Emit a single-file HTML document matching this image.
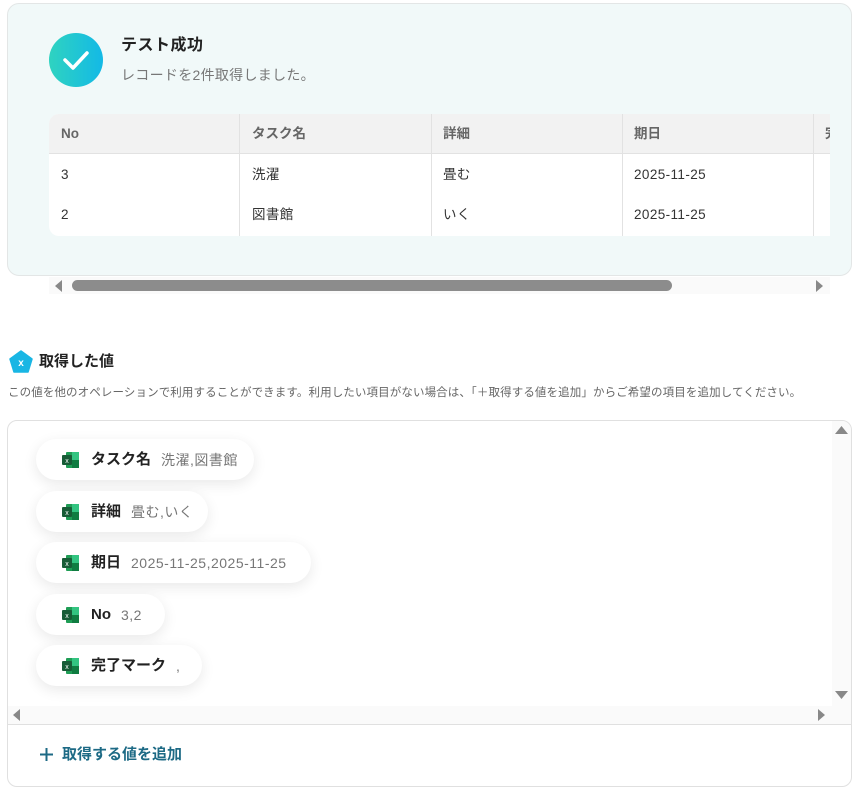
<!DOCTYPE html>
<html><head><meta charset="utf-8"><style>
*{margin:0;padding:0;box-sizing:border-box}
body{width:865px;height:792px;background:#fff;font-family:"Liberation Sans","Noto Sans CJK JP",sans-serif;position:relative;overflow:hidden;color:#333}
.abs{position:absolute}
.card{left:7px;top:3px;width:845px;height:273px;background:#f1f9f9;border:1px solid #e3e6e6;border-radius:12px}
.chk{left:49px;top:33px;width:54px;height:54px;border-radius:50%;background:linear-gradient(90deg,#2fd3c0,#13b9e6)}
.tbl{left:49px;top:114px;width:781px;height:122px;background:#fff;border-radius:10px 0 0 10px;overflow:hidden}
.hdr{left:0;top:0;width:781px;height:40px;background:#f2f2f2;border-bottom:1px solid #e2e2e2}
.vl{width:1px;background:#e2e2e2;top:0;height:122px}
.t{font-size:13.5px;white-space:nowrap;line-height:18px;height:18px;letter-spacing:.4px}
.h{color:#666;font-weight:bold;letter-spacing:0}
.pill{left:36px;height:41px;border-radius:21px;background:#fff;box-shadow:0 4px 14px rgba(0,0,0,.09);display:flex;align-items:center;padding-left:26px;white-space:nowrap;line-height:20px}
.pill b{font-size:15px;color:#222;margin-left:12px;font-weight:600}
.pill span{font-size:14px;color:#777;margin-left:10px;letter-spacing:.5px}
.xl{width:17px;height:16px;position:relative}
</style></head><body>
<div class="abs card"></div>
<div class="abs chk"><svg width="54" height="54"><path d="M16 27 L24 35 L38 20" stroke="#fff" stroke-width="3.5" fill="none" stroke-linecap="round" stroke-linejoin="round"/></svg></div>
<div class="abs" style="left:121px;top:36px;font-size:16px;line-height:20px;font-weight:bold;color:#222;letter-spacing:.5px">テスト成功</div>
<div class="abs" style="left:121px;top:65px;font-size:14px;line-height:20px;color:#777;letter-spacing:.3px">レコードを2件取得しました。</div>
<div class="abs tbl">
<div class="abs hdr"></div>
<div class="abs vl" style="left:190px"></div><div class="abs vl" style="left:382px"></div><div class="abs vl" style="left:573px"></div><div class="abs vl" style="left:764px"></div>
<div class="abs t h" style="left:12px;top:11px">No</div>
<div class="abs t h" style="left:203px;top:11px">タスク名</div>
<div class="abs t h" style="left:394px;top:11px">詳細</div>
<div class="abs t h" style="left:585px;top:11px">期日</div>
<div class="abs t h" style="left:776px;top:11px">完了</div>
<div class="abs t" style="left:12px;top:52px">3</div><div class="abs t" style="left:203px;top:52px">洗濯</div><div class="abs t" style="left:394px;top:52px">畳む</div><div class="abs t" style="left:585px;top:52px">2025-11-25</div>
<div class="abs t" style="left:12px;top:92px">2</div><div class="abs t" style="left:203px;top:92px">図書館</div><div class="abs t" style="left:394px;top:92px">いく</div><div class="abs t" style="left:585px;top:92px">2025-11-25</div>
</div>
<div class="abs" style="left:49px;top:277px;width:781px;height:17px;background:#fafafa"></div>
<div class="abs" style="left:72px;top:280px;width:600px;height:11px;border-radius:6px;background:#8c8c8c"></div>
<svg class="abs" style="left:54px;top:280px" width="10" height="12"><path d="M8 0 L1 6 L8 12Z" fill="#888"/></svg>
<svg class="abs" style="left:815px;top:280px" width="10" height="12"><path d="M1 0 L8 6 L1 12Z" fill="#888"/></svg>

<svg class="abs" style="left:9px;top:350px" width="24" height="23"><path d="M12 1 L23 9 L19 22 L5 22 L1 9Z" fill="#19b6e4" stroke="#19b6e4" stroke-width="1.5" stroke-linejoin="round"/><text x="12" y="16" font-size="10" font-weight="bold" fill="#fff" text-anchor="middle" font-family="Liberation Sans">x</text></svg>
<div class="abs" style="left:39px;top:352px;font-size:15px;line-height:20px;font-weight:bold;color:#222">取得した値</div>
<div class="abs" style="left:8px;top:385px;font-size:11.5px;line-height:16px;color:#666;white-space:nowrap;letter-spacing:.11px">この値を他のオペレーションで利用することができます。利用したい項目がない場合は、「＋取得する値を追加」からご希望の項目を追加してください。</div>

<div class="abs" style="left:7px;top:420px;width:845px;height:367px;border:1px solid #e0e0e0;border-radius:10px;overflow:hidden">
<div class="abs" style="left:824px;top:0;width:20px;height:285px;background:#fafafa"></div>
<div class="abs" style="left:0;top:285px;width:845px;height:19px;background:#fafafa"></div>
<div class="abs" style="left:0;top:303px;width:845px;height:1px;background:#e0e0e0"></div>
</div>
<svg class="abs" style="left:835px;top:425px" width="13" height="10"><path d="M0 9 L6.5 1 L13 9Z" fill="#888"/></svg>
<svg class="abs" style="left:835px;top:690px" width="13" height="10"><path d="M0 1 L6.5 9 L13 1Z" fill="#888"/></svg>
<svg class="abs" style="left:12px;top:709px" width="10" height="12"><path d="M8 0 L1 6 L8 12Z" fill="#888"/></svg>
<svg class="abs" style="left:817px;top:709px" width="10" height="12"><path d="M1 0 L8 6 L1 12Z" fill="#888"/></svg>

<div class="abs pill" style="top:439px;width:218px"><svg class="xl" viewBox="0 0 17 16"><rect x="4" y="0" width="13" height="16" rx="1" fill="#1f9d55"/><rect x="10" y="0" width="7" height="16" fill="#33c481"/><rect x="10" y="8" width="7" height="8" fill="#107c41"/><rect x="0" y="3" width="10" height="10" rx="1" fill="#185c37"/><text x="5" y="11" font-size="7" fill="#fff" text-anchor="middle" font-family="Liberation Sans">x</text></svg><b>タスク名</b><span>洗濯,図書館</span></div>
<div class="abs pill" style="top:491px;width:172px"><svg class="xl" viewBox="0 0 17 16"><rect x="4" y="0" width="13" height="16" rx="1" fill="#1f9d55"/><rect x="10" y="0" width="7" height="16" fill="#33c481"/><rect x="10" y="8" width="7" height="8" fill="#107c41"/><rect x="0" y="3" width="10" height="10" rx="1" fill="#185c37"/><text x="5" y="11" font-size="7" fill="#fff" text-anchor="middle" font-family="Liberation Sans">x</text></svg><b>詳細</b><span>畳む,いく</span></div>
<div class="abs pill" style="top:542px;width:275px"><svg class="xl" viewBox="0 0 17 16"><rect x="4" y="0" width="13" height="16" rx="1" fill="#1f9d55"/><rect x="10" y="0" width="7" height="16" fill="#33c481"/><rect x="10" y="8" width="7" height="8" fill="#107c41"/><rect x="0" y="3" width="10" height="10" rx="1" fill="#185c37"/><text x="5" y="11" font-size="7" fill="#fff" text-anchor="middle" font-family="Liberation Sans">x</text></svg><b>期日</b><span>2025-11-25,2025-11-25</span></div>
<div class="abs pill" style="top:594px;width:129px"><svg class="xl" viewBox="0 0 17 16"><rect x="4" y="0" width="13" height="16" rx="1" fill="#1f9d55"/><rect x="10" y="0" width="7" height="16" fill="#33c481"/><rect x="10" y="8" width="7" height="8" fill="#107c41"/><rect x="0" y="3" width="10" height="10" rx="1" fill="#185c37"/><text x="5" y="11" font-size="7" fill="#fff" text-anchor="middle" font-family="Liberation Sans">x</text></svg><b>No</b><span>3,2</span></div>
<div class="abs pill" style="top:645px;width:166px"><svg class="xl" viewBox="0 0 17 16"><rect x="4" y="0" width="13" height="16" rx="1" fill="#1f9d55"/><rect x="10" y="0" width="7" height="16" fill="#33c481"/><rect x="10" y="8" width="7" height="8" fill="#107c41"/><rect x="0" y="3" width="10" height="10" rx="1" fill="#185c37"/><text x="5" y="11" font-size="7" fill="#fff" text-anchor="middle" font-family="Liberation Sans">x</text></svg><b>完了マーク</b><span>,</span></div>

<svg class="abs" style="left:39px;top:747px" width="15" height="15"><path d="M7.5 1 V14 M1 7.5 H14" stroke="#1d6a85" stroke-width="2"/></svg>
<div class="abs" style="left:62px;top:745px;font-size:15px;line-height:20px;font-weight:bold;color:#1d6a85">取得する値を追加</div>
</body></html>
